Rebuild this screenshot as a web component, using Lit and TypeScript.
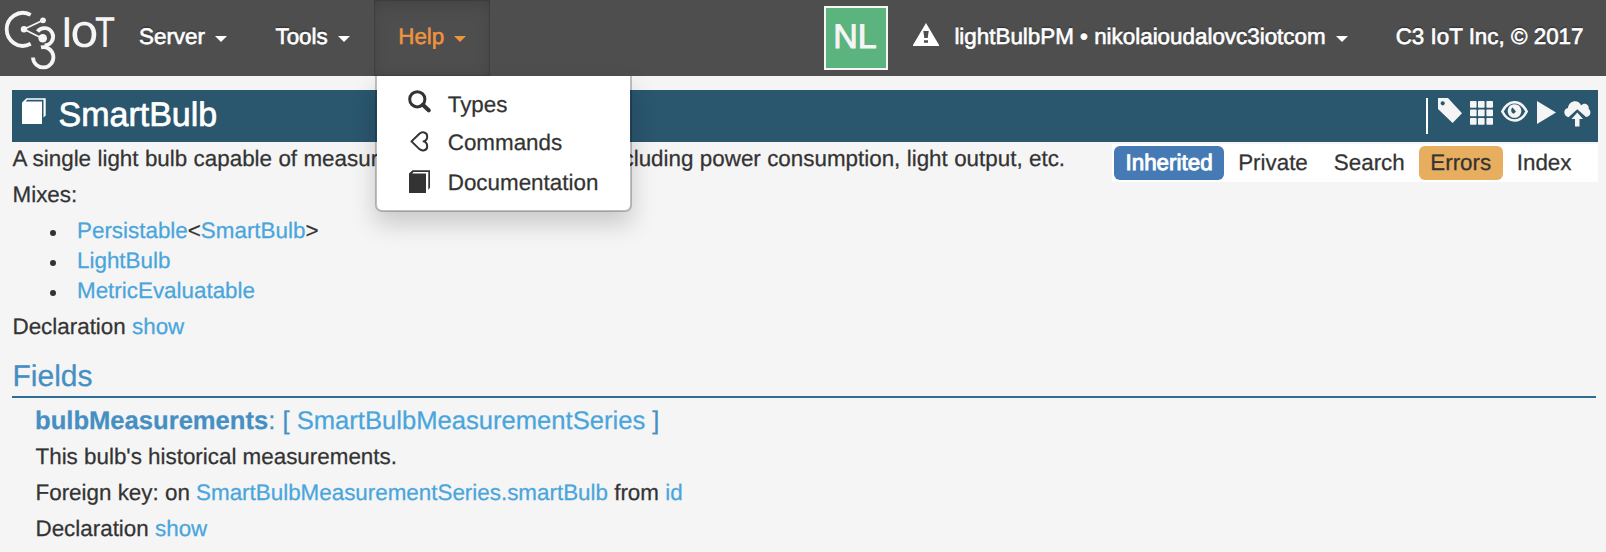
import { LitElement, html, css, svg } from "lit";
import { customElement } from "lit/decorators.js";

const book = html`<svg class="book" viewBox="0 0 24 26" width="24" height="26">
  <path fill="currentColor" d="M0 4.500 4.500 .3H23.700V17.500L21.500 19.500V1.800H5.200L3.600 3.600H20V26H0Z" />
</svg>`;

const smallBook = html`<svg viewBox="0 0 21 23" width="21" height="23">
  <path fill="currentColor" d="M0 3.500 3.500 .3H21V17.500L19.300 20V2H4.500L3.200 3.400H17V23H0Z" />
</svg>`;

const magnifier = html`<svg viewBox="0 0 23 23" width="23" height="23">
  <circle cx="9.3" cy="9.3" r="7.6" fill="none" stroke="currentColor" stroke-width="3" />
  <path d="m14.8 14.8 5.900 5.500" stroke="currentColor" stroke-width="4" stroke-linecap="round" />
</svg>`;

const heart = html`<svg viewBox="0 0 19 21" width="19" height="21">
  <path fill="none" stroke="currentColor" stroke-width="2" stroke-linejoin="round"
    d="M1.500 10.400 9.400 2.700C12 .3 17 1 17.200 5.200 17.300 8.200 15.600 9.800 13.600 10.400 15.600 11 17.300 12.700 17.200 15.600 17 19.800 12 20.500 9.400 18.100Z" />
</svg>`;

const warning = html`<svg viewBox="0 0 26 23" width="26" height="23">
  <path fill="currentColor" fill-rule="evenodd"
    d="M13 0 26 22V23H0V22ZM10.300 8 11.300 15H14.700L15.700 8ZM11 17.300V19.800H15V17.300Z" />
</svg>`;

const tag = html`<svg viewBox="0 0 24 25" width="24" height="25">
  <path fill="currentColor" fill-rule="evenodd"
    d="M0 0H10L24 15.200 14.600 25 0 11ZM4.700 3.200a2.100 2.100 0 1 0 .01 0Z" />
</svg>`;

const grid = html`<svg viewBox="0 0 23 24" width="23" height="24">
  ${[0, 8.5, 17].map((y) =>
    [0, 8, 16.4].map((x) => svg`<rect x=${x} y=${y} width="6.600" height="6.800" rx=".8" fill="currentColor" />`))}
</svg>`;

const eye = html`<svg viewBox="0 0 27 21" width="27" height="21">
  <path fill="none" stroke="currentColor" stroke-width="2.600" d="M1.300 10.500C7.500-1.800 19.500-1.800 25.700 10.500 19.500 22.500 7.500 22.500 1.300 10.500Z" />
  <path fill="currentColor" fill-rule="evenodd" d="M13.500 3.200a6.800 6.800 0 1 0 .01 0ZM11.500 6.500C9.300 8 10 12 12.800 12.800L15 10.500Z" />
</svg>`;

const play = html`<svg viewBox="0 0 19 23" width="19" height="23">
  <path fill="currentColor" d="M0 0 19 11.500 0 23Z" />
</svg>`;

const cloud = html`<svg viewBox="0 0 27 26" width="27" height="26">
  <path fill="currentColor" d="M4.500 16.200C-1 15 -1 7.500 4 7 4.500-.5 14.500-2.500 17 4.300 22-.3 26 6 24.500 7.800 28 10.500 26.500 16 22 16L13.300 8.200Z" />
  <path fill="currentColor" d="M13.300 11.500 19 17.900H15.500V25.500H11V17.900H7.500Z" />
</svg>`;

const logo = html`<svg class="logo" viewBox="0 0 120 76" width="120" height="76">
  <g fill="none" stroke="currentColor">
    <path stroke-width="3.800" d="M30.700 14.900C18 8.500 6.700 18.500 6.700 29.300S18 50.500 30.700 43.800" />
    <path stroke-width="3.800" d="M37.500 31.500A8.700 8.700 0 1 1 44.500 45.500M41 47.300A10.200 10.200 0 1 1 33 57.500" />
    <path stroke-width="1.700" d="M43 20.300 24 29.300 42.500 38.500" />
  </g>
  <g fill="currentColor">
    <circle cx="43" cy="20.300" r="2.900" /><circle cx="24" cy="29.300" r="3.200" /><circle cx="42.700" cy="38.300" r="4.300" />
  </g>
  <g class="wordmark">
    <text x="61" y="47.300" font-size="41.500">I</text>
    <text x="70.400" y="47.300" font-size="49">o</text>
    <text x="95.200" y="47.300" font-size="41.500" textLength="19.500" lengthAdjust="spacingAndGlyphs">T</text>
  </g>
</svg>`;

@customElement("app-root")
export class AppRoot extends LitElement {
  static styles = css`
    :host {
      display: block;
      height: 552px;
      overflow: hidden;
      background: #f5f5f5;
      color: #333;
      font: 22.4px "Liberation Sans", Arial, sans-serif;
      text-rendering: geometricPrecision;
      -webkit-text-stroke: .25px currentColor;
    }
    * { box-sizing: border-box; }
    svg { display: block; flex: none; }
    a { color: #49a5dc; text-decoration: none; -webkit-text-stroke: .25px currentColor; }
    .nav {
      display: flex;
      height: 76px;
      background: #4e4e4e;
      color: #fff;
      line-height: 73px;
      text-shadow: 0 -2px 0 rgba(0, 0, 0, .25);
      -webkit-text-stroke: .6px currentColor;
    }
    .logo { margin-right: -5px; color: #f5f5f5; text-shadow: none; -webkit-text-stroke: .3px currentColor; }
    .wordmark { font-family: Lato, sans-serif; fill: currentColor; stroke: none; }
    .menu { position: relative; display: flex; height: 76px; padding: 0 24px; }
    .menu + .menu { padding-left: 24.500px; }
    .menu.open { color: #ee9340; box-shadow: inset 0 6px 16px rgba(0, 0, 0, .125), inset 0 0 2px rgba(0, 0, 0, .4); text-shadow: none; -webkit-text-stroke: .5px currentColor; }
    .caret { align-self: flex-start; margin: 36px 0 0 10px; border: 6.500px solid transparent; border-top: 6.500px solid currentColor; border-bottom: 0; }
    .avatar {
      width: 64px; height: 64px; margin: 6px 25px 0 auto; padding-right: 3px; border: 2px solid #f5f5f5;
      background: #5bb47d; color: #f5f5f5; font-size: 34px; line-height: 58px; text-align: center;
      text-shadow: none; -webkit-text-stroke: 1px currentColor;
    }
    .warn { margin-top: 23px; }
    .user { display: flex; margin-left: 15px; }
    .owner { margin: 0 22.500px 0 48px; }
    .dropdown {
      position: absolute; z-index: 2; top: 76px; left: 1px; width: 257px; height: 136px; padding: 8px 0;
      border: 2px solid rgba(0, 0, 0, .22); border-top: 0; border-radius: 0 0 7px 7px;
      background: #fff; background-clip: padding-box; color: #333;
      box-shadow: 0 12px 24px rgba(0, 0, 0, .18); -webkit-text-stroke: .25px currentColor;
    }
    .item { display: flex; height: 39px; line-height: 41px; }
    .glyph { display: flex; justify-content: center; width: 44px; margin: 6px 6.500px 0 20.500px; }
    .item:nth-child(n + 2) .glyph { margin-top: 8px; }
    .item:nth-child(2) { line-height: 40px; }
    .page { padding: 14px 8px 0 12px; }
    .titlebar { display: flex; height: 52px; background: #2a566e; color: #fff; padding-left: 10px; }
    .titlebar .book { margin-top: 8px; }
    .title { margin: 0 0 0 12.500px; font-size: 34px; font-weight: 400; line-height: 50px; -webkit-text-stroke: .7px currentColor; }
    .tools { display: flex; align-items: flex-start; margin: 8px 7px 0 auto; height: 36px; border-left: 2px solid #fff; padding-left: 10px; color: #f5f5f5; gap: 8px; }
    .tools :nth-child(n + 2) { margin-top: 3px; }
    .tools :nth-child(4) { margin-left: 1px; }
    .row { display: flex; align-items: flex-start; justify-content: space-between; height: 34px; }
    .desc { margin: 0; padding-left: .5px; line-height: 33px; white-space: nowrap; word-spacing: .15px; }
    .filters { display: flex; gap: 2px; margin-top: 2px; height: 38px; padding: 2px 14.500px 2px 2px; background: #fff; flex: none; }
    .pill { height: 34px; line-height: 33px; padding: 0 12px; border-radius: 6px; }
    .pill.on { background: #457ab5; color: #fff; padding: 0 11.500px; -webkit-text-stroke: .9px currentColor; }
    .pill.warned { padding: 0 11.500px; background: #e6ae5e; }
    .line { height: 36px; line-height: 37px; margin: 0; padding-left: .5px; }
    .mixes { margin: 3px 0 0; padding: 0 0 3px 38px; list-style: none; }
    .mix { display: flex; align-items: center; height: 30px; line-height: 31px; }
    .mix::before { content: ""; width: 6px; height: 6px; margin: 5px 21px 0 0; border-radius: 50%; background: #333; }
    .section { margin: 0 2px 0 0; padding-left: .5px; height: 54px; border-bottom: 2px solid #2f6f92; color: #468fc3; font-size: 30px; font-weight: 400; line-height: 65px; -webkit-text-stroke: .25px currentColor; }
    .field { padding: 5px 0 0 23px; }
    .signature { margin: 0; height: 35px; font-size: 25.600px; line-height: 37px; font-weight: 400; color: #468fc3; -webkit-text-stroke: .25px currentColor; }
  `;

  render() {
    return html`
      <nav class="nav">
        ${logo}
        <div class="menu">Server<i class="caret"></i></div>
        <div class="menu">Tools<i class="caret"></i></div>
        <div class="menu open">Help<i class="caret"></i>
          <div class="dropdown">
            <div class="item"><span class="glyph">${magnifier}</span>Types</div>
            <div class="item"><span class="glyph">${heart}</span>Commands</div>
            <div class="item"><span class="glyph">${smallBook}</span>Documentation</div>
          </div>
        </div>
        <div class="avatar">NL</div>
        <div class="warn">${warning}</div>
        <div class="user">lightBulbPM • nikolaioudalovc3iotcom<i class="caret"></i></div>
        <div class="owner">C3 IoT Inc, © 2017</div>
      </nav>
      <main class="page">
        <header class="titlebar">
          ${book}
          <h1 class="title">SmartBulb</h1>
          <div class="tools">${tag}${grid}${eye}${play}${cloud}</div>
        </header>
        <div class="row">
          <p class="desc">A single light bulb capable of measuring various properties, including power consumption, light output, etc.</p>
          <div class="filters">
            <span class="pill on">Inherited</span>
            <span class="pill">Private</span>
            <span class="pill">Search</span>
            <span class="pill warned">Errors</span>
            <span class="pill">Index</span>
          </div>
        </div>
        <p class="line">Mixes:</p>
        <ul class="mixes">
          <li class="mix"><span><a>Persistable</a>&lt;<a>SmartBulb</a>&gt;</span></li>
          <li class="mix"><a>LightBulb</a></li>
          <li class="mix"><a>MetricEvaluatable</a></li>
        </ul>
        <p class="line">Declaration <a>show</a></p>
        <h2 class="section">Fields</h2>
        <section class="field">
          <h3 class="signature"><b>bulbMeasurements</b>: [ <a>SmartBulbMeasurementSeries</a> ]</h3>
          <p class="line">This bulb's historical measurements.</p>
          <p class="line">Foreign key: on <a>SmartBulbMeasurementSeries.smartBulb</a> from <a>id</a></p>
          <p class="line">Declaration <a>show</a></p>
        </section>
      </main>
    `;
  }
}
